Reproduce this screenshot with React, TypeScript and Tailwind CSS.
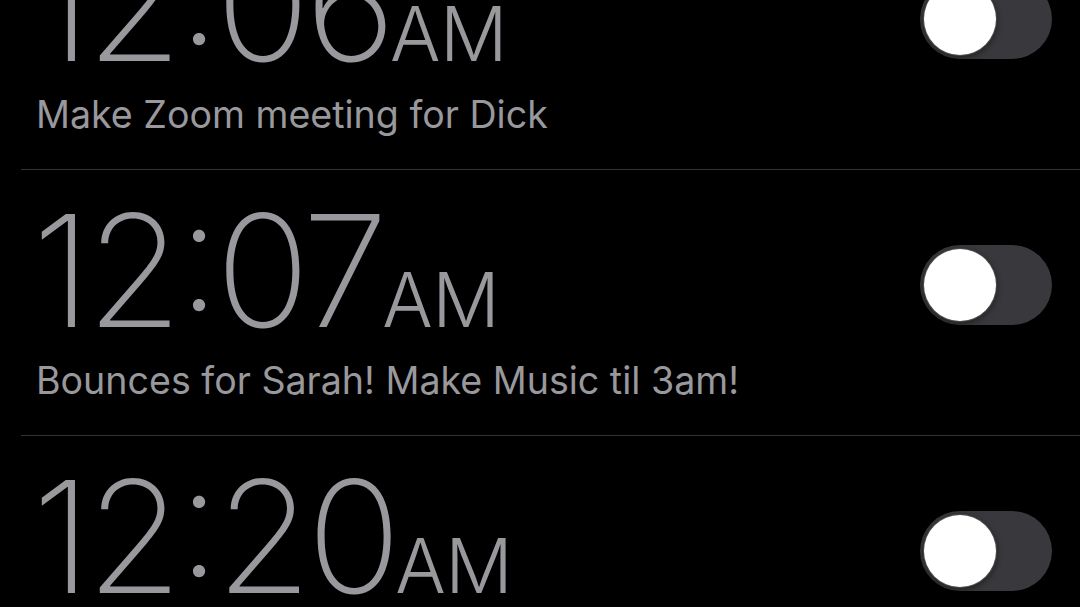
import React from "react";

type Alarm = { time: string; label: string };

const alarms: Alarm[] = [
  { time: "12:06", label: "Make Zoom meeting for Dick" },
  { time: "12:07", label: "Bounces for Sarah! Make Music til 3am!" },
  { time: "12:20", label: "Wake up" },
];

function Toggle() {
  return (
    <div className="flex h-[80px] w-[132px] items-center rounded-full bg-[#39393d] p-[3px]">
      <div className="h-[74px] w-[74px] rounded-full border border-black/70 bg-white shadow-[0_2px_6px_rgba(0,0,0,0.45)]" />
    </div>
  );
}

function Row({ alarm }: { alarm: Alarm }) {
  return (
    <div className="ml-[21px] flex h-[266px] shrink-0 items-start justify-between border-b border-[#333336] pl-[15px] pr-[28px]">
      <div className="flex flex-col pt-[23px]">
        <div className="flex items-baseline whitespace-nowrap text-[#98989d]">
          <span className="-ml-[4px] text-[156px] font-extralight leading-[156px] tracking-[-5px] [font-feature-settings:'case']">
            {alarm.time}
          </span>
          <span className="-ml-[1px] text-[75px] font-light leading-[76px] tracking-[-0.5px]">AM</span>
        </div>
        <div className="mt-[10px] whitespace-nowrap text-[37.6px] leading-[44px] text-[#98989d]">
          {alarm.label}
        </div>
      </div>
      <div className="mt-[75px]">
        <Toggle />
      </div>
    </div>
  );
}

export default function App() {
  return (
    <div
      className="h-[607px] w-[1080px] overflow-hidden bg-black"
      style={{ fontFamily: '"Inter", "Liberation Sans", sans-serif' }}
    >
      <div className="-mt-[96px] flex flex-col">
        {alarms.map((a) => (
          <Row key={a.time} alarm={a} />
        ))}
      </div>
    </div>
  );
}
